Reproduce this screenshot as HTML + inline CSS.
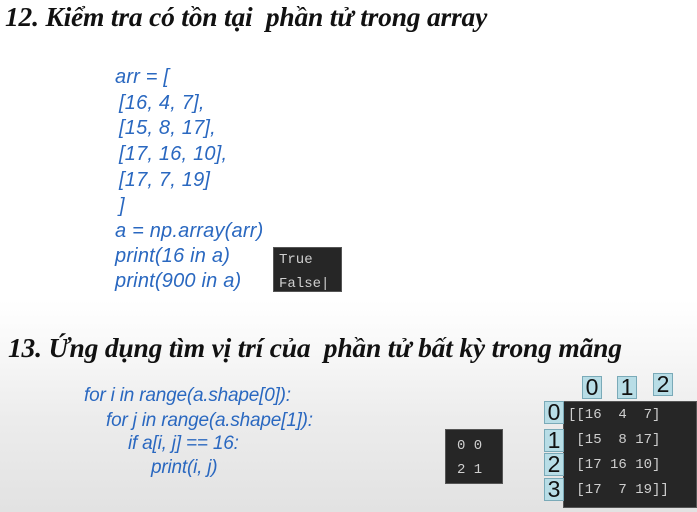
<!DOCTYPE html>
<html><head><meta charset="utf-8"><style>
body{margin:0;width:697px;height:512px;overflow:hidden;position:relative;
background:linear-gradient(#fff 0,#fff 300px,#f6f6f6 360px,#ececec 420px,#e2e2e2 512px);
font-family:"Liberation Sans",sans-serif}
.t{position:absolute;font-family:"Liberation Serif",serif;font-weight:bold;font-style:italic;font-size:27.5px;color:#111;white-space:pre;letter-spacing:-0.2px}
.c{position:absolute;font-style:italic;font-size:19px;color:#2a68c0;white-space:pre;line-height:20px;letter-spacing:-0.2px}
.c2{font-size:20px;letter-spacing:0.2px}
.box{position:absolute;background:#262626;color:#cfcfcf;font-family:"Liberation Mono",monospace;font-size:14px;white-space:pre;border:1px solid #555}
.lb{position:absolute;background:#b8dde6;border:1px solid #7aaab8;font-size:23px;line-height:21px;color:#111;text-align:center;width:18px;height:21px}
</style></head><body>
<div class="t" style="left:5px;top:1px">12. Kiểm tra có tồn tại  phần tử trong array</div>
<div class="c c2" style="left:115px;top:67px">arr = [</div>
<div class="c c2" style="left:119px;top:93px">[16, 4, 7],</div>
<div class="c c2" style="left:119px;top:118px">[15, 8, 17],</div>
<div class="c c2" style="left:119px;top:144px">[17, 16, 10],</div>
<div class="c c2" style="left:119px;top:170px">[17, 7, 19]</div>
<div class="c c2" style="left:119px;top:196px">]</div>
<div class="c c2" style="left:115px;top:221px">a = np.array(arr)</div>
<div class="c c2" style="left:115px;top:246px">print(16 in a)</div>
<div class="c c2" style="left:115px;top:271px">print(900 in a)</div>
<div class="box" style="left:273px;top:247px;width:69px;height:45px;line-height:24px;padding-left:5px;box-sizing:border-box">True
False|</div>
<div class="t" style="left:8px;top:332px">13. Ứng dụng tìm vị trí của  phần tử bất kỳ trong mãng</div>
<div class="c" style="left:84px;top:386px">for i in range(a.shape[0]):</div>
<div class="c" style="left:106px;top:411px">for j in range(a.shape[1]):</div>
<div class="c" style="left:128px;top:434px">if a[i, j] == 16:</div>
<div class="c" style="left:151px;top:458px">print(i, j)</div>
<div class="box" style="left:445px;top:429px;width:58px;height:55px;line-height:24px;padding:4px 0 0 11px;box-sizing:border-box">0 0
2 1</div>
<div class="box" style="left:563px;top:401px;width:134px;height:107px;line-height:25px;padding:1px 0 0 4px;box-sizing:border-box">[[16  4  7]
 [15  8 17]
 [17 16 10]
 [17  7 19]]</div>
<div class="lb" style="left:582px;top:376px">0</div>
<div class="lb" style="left:617px;top:376px">1</div>
<div class="lb" style="left:653px;top:373px">2</div>
<div class="lb" style="left:544px;top:401px">0</div>
<div class="lb" style="left:544px;top:429px">1</div>
<div class="lb" style="left:544px;top:453px">2</div>
<div class="lb" style="left:544px;top:478px">3</div>
</body></html>
